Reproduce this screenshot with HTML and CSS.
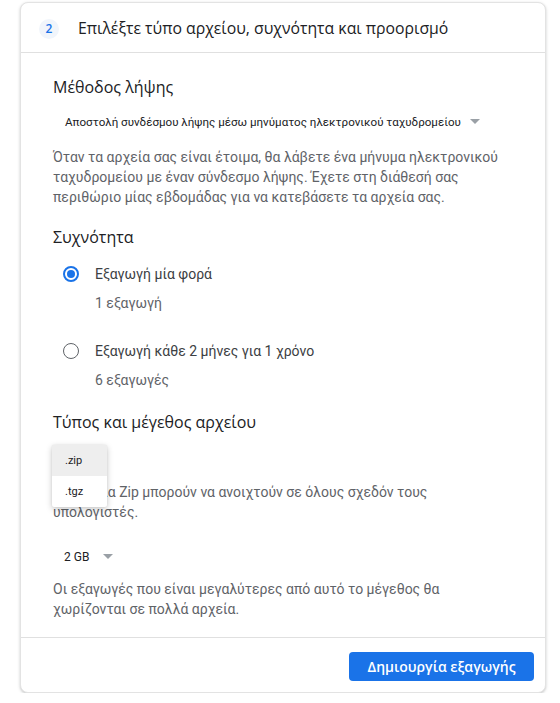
FILE: index.html
```html
<!DOCTYPE html>
<html lang="el">
<head>
<meta charset="utf-8">
<link rel="stylesheet" href="styles.css">
</head>
<body>
<div class="card">
  <div class="card-head">
    <span class="step">2</span>
    <span class="head-title">Επιλέξτε τύπο αρχείου, συχνότητα και προορισμό</span>
  </div>
  <div class="card-body">
    <h3 class="sec-title">Μέθοδος λήψης</h3>
    <div class="select select-wide">
      <span>Αποστολή συνδέσμου λήψης μέσω μηνύματος ηλεκτρονικού ταχυδρομείου</span>
      <span class="caret"></span>
    </div>
    <p class="desc method-desc">Όταν τα αρχεία σας είναι έτοιμα, θα λάβετε ένα μήνυμα ηλεκτρονικού ταχυδρομείου με έναν σύνδεσμο λήψης. Έχετε στη διάθεσή σας περιθώριο μίας εβδομάδας για να κατεβάσετε τα αρχεία σας.</p>

    <h3 class="sec-title sec-freq">Συχνότητα</h3>
    <div class="radio-row">
      <span class="radio checked"></span>
      <div class="radio-text">
        <div class="radio-label">Εξαγωγή μία φορά</div>
        <div class="radio-sub">1 εξαγωγή</div>
      </div>
    </div>
    <div class="radio-row radio-row2">
      <span class="radio"></span>
      <div class="radio-text">
        <div class="radio-label">Εξαγωγή κάθε 2 μήνες για 1 χρόνο</div>
        <div class="radio-sub">6 εξαγωγές</div>
      </div>
    </div>

    <h3 class="sec-title sec-type">Τύπος και μέγεθος αρχείου</h3>
    <div class="type-block">
      <p class="desc narrow">Τα αρχεία Zip μπορούν να ανοιχτούν σε όλους σχεδόν τους υπολογιστές.</p>
      <div class="menu">
        <div class="menu-item active">.zip</div>
        <div class="menu-item">.tgz</div>
      </div>
    </div>
    <div class="select select-size">
      <span>2 GB</span>
      <span class="caret"></span>
    </div>
    <p class="desc narrow size-desc">Οι εξαγωγές που είναι μεγαλύτερες από αυτό το μέγεθος θα χωρίζονται σε πολλά αρχεία.</p>
  </div>
  <div class="card-foot">
    <button class="btn">Δημιουργία εξαγωγής</button>
  </div>
</div>
</body>
</html>
```

FILE: styles.css
```css
* { box-sizing: border-box; }
html, body { margin: 0; padding: 0; background: #ffffff; }
body {
  font-family: Roboto, "Noto Sans", Arial, sans-serif;
  color: #202124;
  padding: 2px 14px 0 20px;
}
.card {
  width: 526px;
  height: 691px;
  border: 1px solid #e3e3e3;
  border-radius: 8px;
  box-shadow: 0 1px 2px rgba(60,64,67,0.18), 0 1px 3px 1px rgba(60,64,67,0.08);
  display: flex;
  flex-direction: column;
  background: #fff;
}
.card-head {
  height: 50px;
  display: flex;
  align-items: center;
  padding-left: 18px;
  border-bottom: 1px solid #e0e0e0;
  flex: none;
}
.step {
  width: 20px;
  height: 20px;
  border-radius: 50%;
  background: #f1f5fb;
  color: #1a73e8;
  font-family: "Open Sans", Roboto, sans-serif;
  font-size: 12px;
  font-weight: 600;
  display: flex;
  align-items: center;
  justify-content: center;
  margin-right: 19px;
  margin-top: 2px;
}
.head-title {
  font-family: "Open Sans", "Noto Sans", sans-serif;
  font-size: 15.8px;
  color: #202124;
}
.card-body {
  flex: 1;
  padding: 22px 20px 0 32px;
  position: relative;
}
.sec-title {
  margin: 0;
  font-family: "Open Sans", "Noto Sans", sans-serif;
  font-weight: 400;
  font-size: 16px;
  line-height: 24px;
  color: #202124;
}
.select {
  display: flex;
  align-items: center;
  gap: 9px;
  color: #202124;
  font-size: 11.6px;
}
.select-wide {
  margin: 11px 0 0 12px;
  height: 24px;
}
.caret {
  width: 0;
  height: 0;
  border-left: 5px solid transparent;
  border-right: 5px solid transparent;
  border-top: 5px solid #9aa0a6;
  margin-top: -2px;
}
.desc {
  margin: 0;
  font-size: 14px;
  line-height: 20px;
  color: #5f6368;
}
.method-desc { margin-top: 13px; max-width: 462px; }
.narrow { max-width: 410px; }
.sec-freq { margin-top: 18px; }
.radio-row {
  display: flex;
  margin-top: 15px;
  padding-left: 10px;
}
.radio-row2 { margin-top: 28px; }
.radio {
  width: 16px;
  height: 16px;
  border: 1.5px solid #5f6368;
  border-radius: 50%;
  margin-top: 2px;
  flex: none;
  position: relative;
}
.radio.checked { border-color: #1a73e8; border-width: 2px; }
.radio.checked::after {
  content: "";
  position: absolute;
  left: 2px; top: 2px;
  width: 8px; height: 8px;
  border-radius: 50%;
  background: #1a73e8;
}
.radio-text { margin-left: 16px; }
.radio-label {
  font-size: 14px;
  line-height: 20px;
  color: #3c4043;
}
.radio-sub {
  margin-top: 9px;
  font-size: 14px;
  line-height: 20px;
  color: #5f6368;
}
.sec-type { margin-top: 20px; }
.type-block {
  position: relative;
  padding-top: 48px;
}
.menu {
  position: absolute;
  left: -1px;
  top: 11px;
  width: 55px;
  background: #fff;
  border-radius: 2px;
  box-shadow: 0 2px 6px rgba(0,0,0,0.22), 0 0 2px rgba(0,0,0,0.08);
}
.menu-item {
  height: 31px;
  font-size: 11px;
  color: #202124;
  display: flex;
  align-items: center;
  padding-left: 13px;
}
.menu-item.active { background: #eeeeee; }
.select-size {
  margin: 24px 0 0 11px;
  height: 22px;
  font-size: 12px;
  gap: 14px;
}
.size-desc { margin-top: 11px; }
.card-foot {
  height: 55px;
  border-top: 1px solid #e0e0e0;
  display: flex;
  align-items: center;
  justify-content: flex-end;
  padding-right: 11px;
  flex: none;
}
.btn {
  height: 29px;
  width: 185px;
  border: none;
  border-radius: 4px;
  background: #1a73e8;
  color: #fff;
  font-family: "Open Sans", Roboto, sans-serif;
  font-weight: 600;
  font-size: 14px;
  margin-top: 2px;
}
```
